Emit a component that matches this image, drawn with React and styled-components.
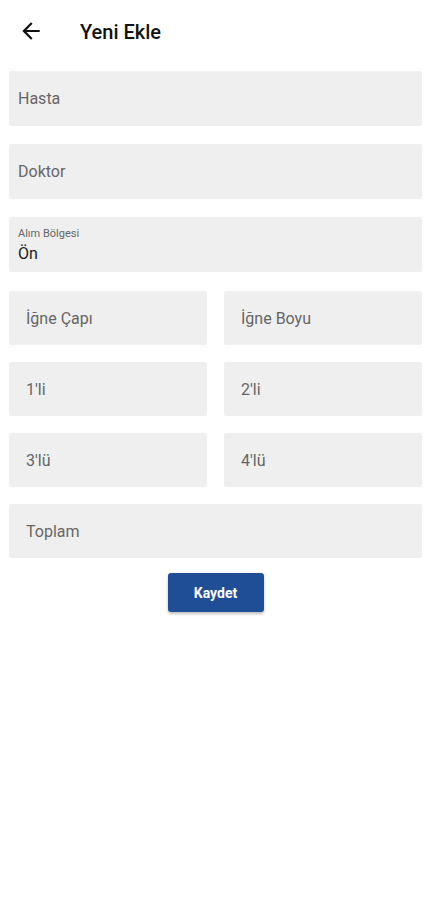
import styled, { createGlobalStyle } from "styled-components";

const GlobalStyle = createGlobalStyle`
  html, body {
    margin: 0;
    padding: 0;
    background: #fff;
    font-family: Roboto, "Liberation Sans", sans-serif;
  }
`;

const BackIcon = () => (
  <svg width="26" height="26" viewBox="0 0 24 24" fill="#111">
    <path d="M20 11H7.83l5.59-5.59L12 4l-8 8 8 8 1.41-1.41L7.83 13H20v-2z" />
  </svg>
);

export default function App() {
  return (
    <>
      <GlobalStyle />
      <Page>
        <Header>
          <BackButton type="button">
            <BackIcon />
          </BackButton>
          <Title>Yeni Ekle</Title>
        </Header>

        <Form>
          <Field>
            <Placeholder>Hasta</Placeholder>
          </Field>
          <Field>
            <Placeholder>Doktor</Placeholder>
          </Field>
          <Field>
            <SmallLabel>Alım Bölgesi</SmallLabel>
            <Value>Ön</Value>
          </Field>

          <Grid>
            <GridField><Placeholder>İğne Çapı</Placeholder></GridField>
            <GridField><Placeholder>İğne Boyu</Placeholder></GridField>
            <GridField><Placeholder>1'li</Placeholder></GridField>
            <GridField><Placeholder>2'li</Placeholder></GridField>
            <GridField><Placeholder>3'lü</Placeholder></GridField>
            <GridField><Placeholder>4'lü</Placeholder></GridField>
            <GridField $wide><Placeholder>Toplam</Placeholder></GridField>
          </Grid>

          <SaveButton type="button">Kaydet</SaveButton>
        </Form>
      </Page>
    </>
  );
}

const Page = styled.div`
  width: 431px;
  min-height: 900px;
  background: #fff;
`;

const Header = styled.div`
  display: flex;
  align-items: center;
  height: 64px;
  padding-left: 18px;
`;

const BackButton = styled.button`
  display: flex;
  align-items: center;
  justify-content: center;
  width: 26px;
  height: 26px;
  padding: 0;
  border: none;
  background: none;
  margin-top: -2px;
`;

const Title = styled.h1`
  margin: 0 0 0 36px;
  font-size: 20px;
  font-weight: 500;
  color: #111;
`;

const Form = styled.div`
  display: flex;
  flex-direction: column;
  gap: 18px;
  padding: 7px 9px 0 9px;
`;

const Field = styled.div`
  height: 55px;
  background: #efefef;
  border-radius: 2px;
  display: flex;
  flex-direction: column;
  justify-content: center;
  padding-left: 9px;
  box-sizing: border-box;
`;

const Grid = styled.div`
  display: grid;
  grid-template-columns: 1fr 1fr;
  column-gap: 17px;
  row-gap: 17px;
  margin-top: 1px;
`;

const GridField = styled.div`
  height: 54px;
  background: #efefef;
  border-radius: 2px;
  display: flex;
  align-items: center;
  padding-left: 17px;
  box-sizing: border-box;
  grid-column: ${(p) => (p.$wide ? "1 / -1" : "auto")};
`;

const Placeholder = styled.span`
  font-size: 16px;
  color: #666;
`;

const SmallLabel = styled.span`
  font-size: 11px;
  color: #666;
`;

const Value = styled.span`
  font-size: 16px;
  color: #1a1a1a;
  margin-top: 4px;
`;

const SaveButton = styled.button`
  align-self: center;
  width: 96px;
  height: 39px;
  margin-top: -3px;
  background: #1f4e96;
  color: #fff;
  border: none;
  border-radius: 3px;
  font-family: Roboto, "Liberation Sans", sans-serif;
  font-size: 14px;
  font-weight: 700;
  box-shadow: 0 2px 3px rgba(0, 0, 0, 0.25);
`;
